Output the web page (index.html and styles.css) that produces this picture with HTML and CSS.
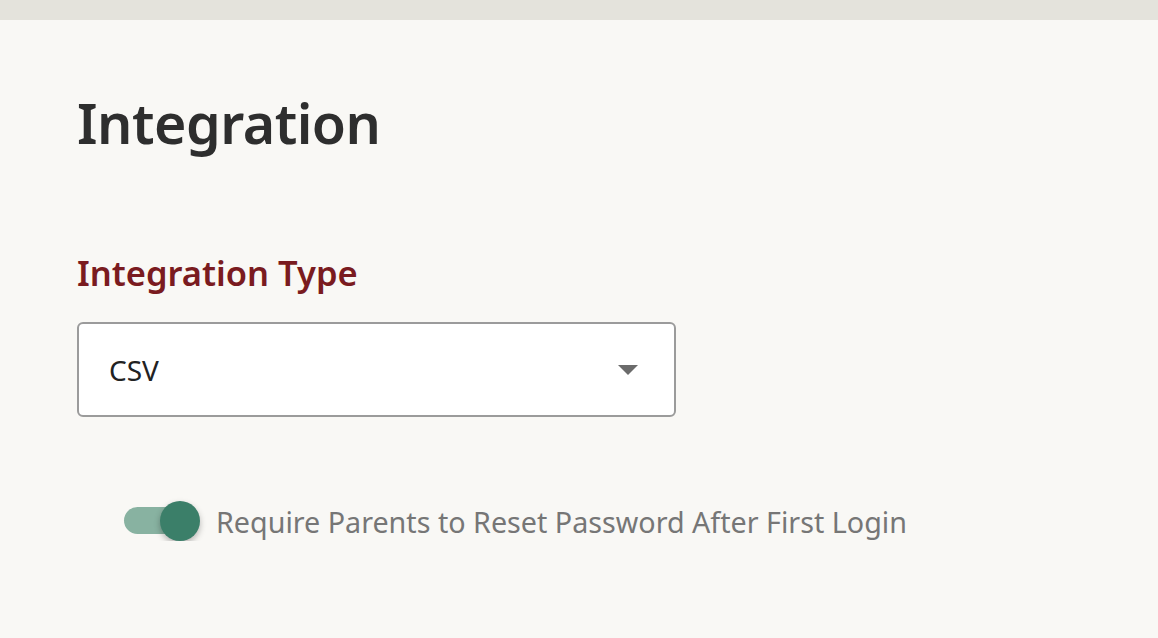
FILE: index.html
```html
<!DOCTYPE html>
<html>
<head>
<meta charset="utf-8">
<link rel="stylesheet" href="styles.css">
</head>
<body>
<div class="topbar"></div>
<main class="content">
  <h1 class="title">Integration</h1>
  <label class="field-label">Integration Type</label>
  <div class="select">
    <span class="select-value">CSV</span>
    <svg class="select-arrow" width="20" height="10" viewBox="0 0 20 10"><path d="M0 0 L20 0 L10 10 Z" fill="#6b6b6b"/></svg>
  </div>
  <div class="toggle-row">
    <div class="toggle">
      <div class="toggle-track"></div>
      <div class="toggle-thumb"></div>
    </div>
    <span class="toggle-label">Require Parents to Reset Password After First Login</span>
  </div>
</main>
</body>
</html>
```
FILE: styles.css
```css
html, body {
  margin: 0;
  padding: 0;
  background: #f9f8f5;
  font-family: "Noto Sans", "Open Sans", sans-serif;
}
.topbar {
  height: 20px;
  background: #e4e3dc;
}
.content {
  padding: 0 0 0 77px;
  display: flex;
  flex-direction: column;
  align-items: flex-start;
}
.title {
  margin: 63px 0 0 0;
  font-size: 55.5px;
  font-weight: 600;
  line-height: 80px;
  color: #2e2e2e;
  letter-spacing: -0.5px;
}
.field-label {
  margin-top: 90px;
  font-size: 34.5px;
  font-weight: 600;
  line-height: 40px;
  color: #7a1b20;
}
.select {
  margin-top: 29px;
  box-sizing: border-box;
  width: 599px;
  height: 95px;
  background: #fff;
  border: 2px solid #9b9b9b;
  border-radius: 6px;
  display: flex;
  align-items: center;
  justify-content: space-between;
  padding: 0 36px 0 30px;
}
.select-value {
  font-size: 28px;
  color: #222;
}
.select-arrow {
  display: block;
}
.toggle-row {
  margin-top: 84px;
  margin-left: 47px;
  display: flex;
  align-items: center;
  gap: 16px;
}
.toggle {
  position: relative;
  width: 76px;
  height: 40px;
}
.toggle-track {
  position: absolute;
  left: 0;
  top: 6px;
  width: 70px;
  height: 27px;
  border-radius: 14px;
  background: #88b2a1;
}
.toggle-thumb {
  position: absolute;
  left: 36px;
  top: 0;
  width: 40px;
  height: 40px;
  border-radius: 50%;
  background: #3b7f69;
  box-shadow: 0 3px 6px rgba(0,0,0,0.28);
}
.toggle-label {
  font-size: 28.7px;
  color: #767676;
}
```
